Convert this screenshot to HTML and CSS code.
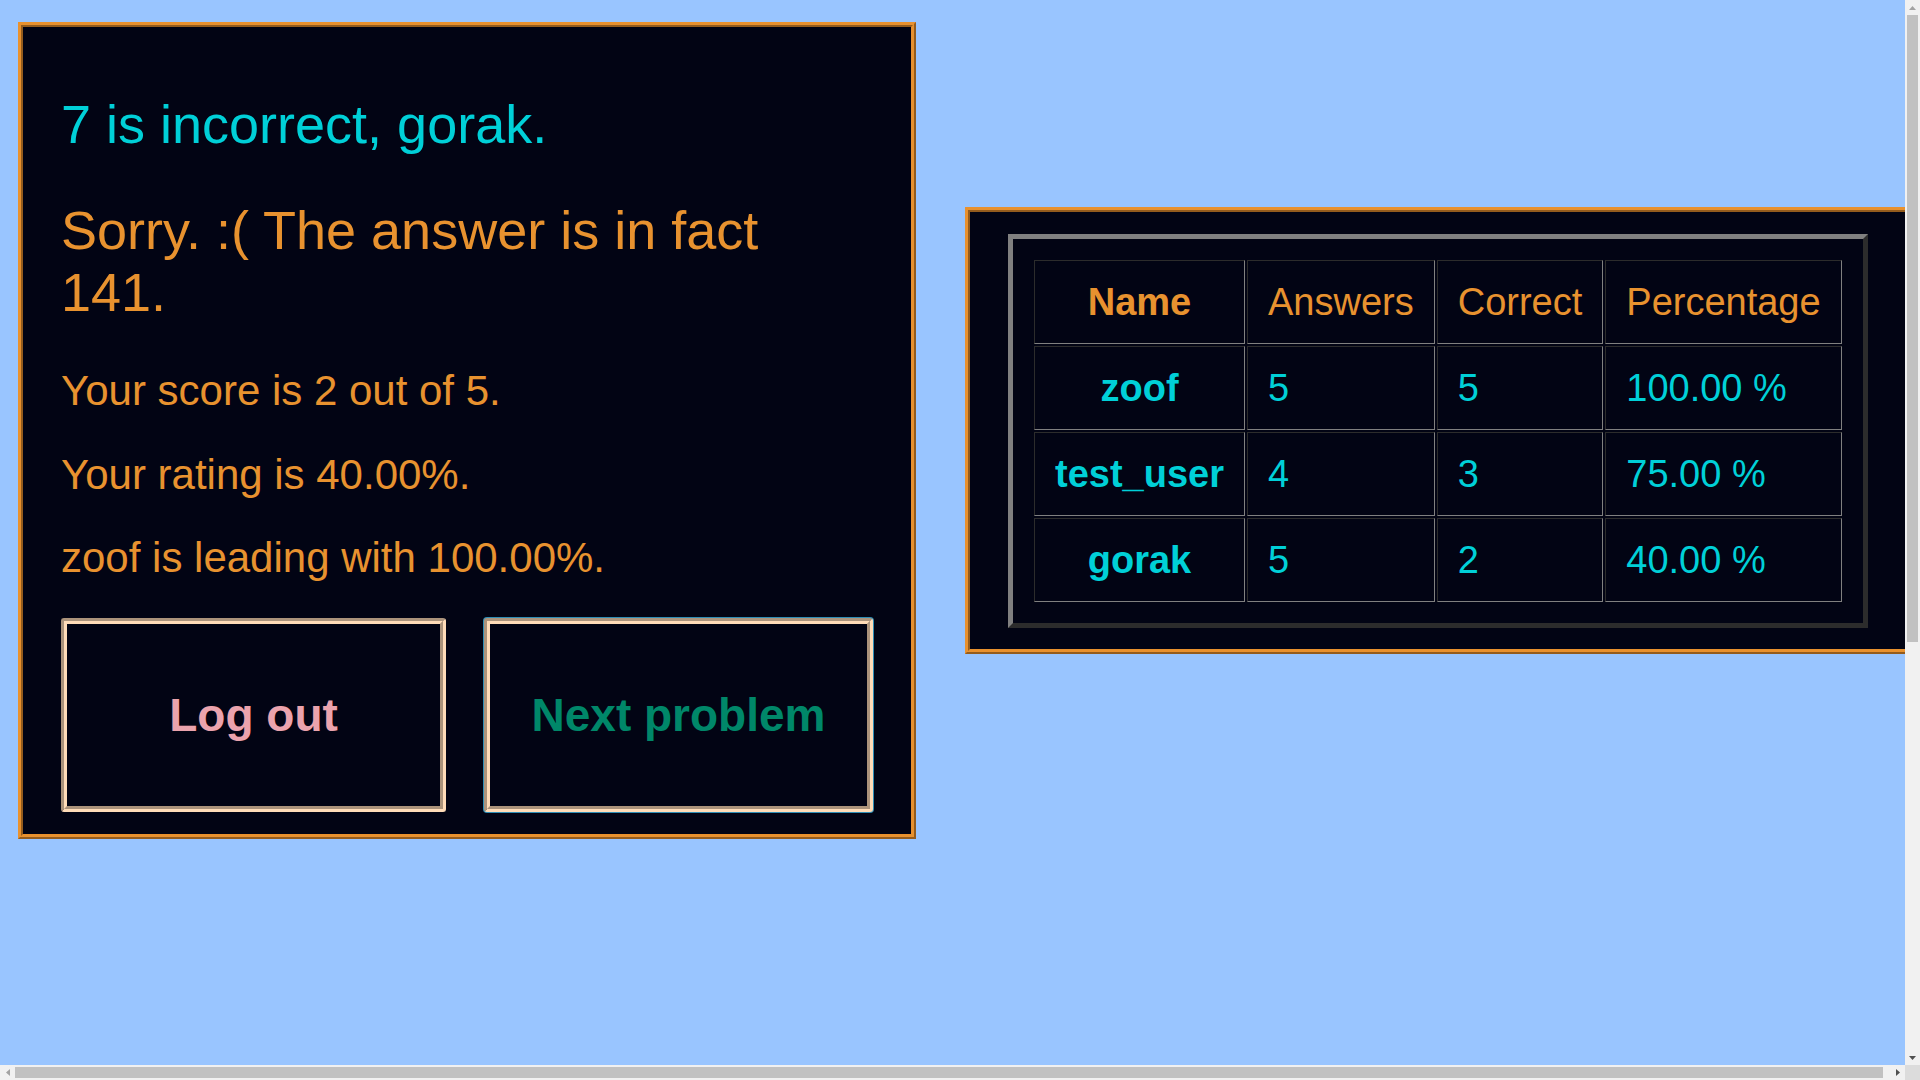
FILE: index.html
```html
<!DOCTYPE html>
<html lang="en">
<head>
<meta charset="utf-8">
<title>Quiz result</title>
<link rel="stylesheet" href="styles.css">
</head>
<body>
<div class="row">
  <section class="panel result">
    <p class="big cyan">7 is incorrect, gorak.</p>
    <p class="big orange">Sorry. :( The answer is in fact 141.</p>
    <p class="small">Your score is 2 out of 5.</p>
    <p class="small">Your rating is 40.00%.</p>
    <p class="small">zoof is leading with 100.00%.</p>
    <div class="actions">
      <button class="btn logout" type="button">Log out</button>
      <button class="btn next" type="button">Next problem</button>
    </div>
  </section>
  <section class="panel board">
    <table class="scores">
      <tr class="head">
        <th>Name</th>
        <td>Answers</td>
        <td>Correct</td>
        <td>Percentage</td>
      </tr>
      <tr>
        <th>zoof</th>
        <td>5</td>
        <td>5</td>
        <td>100.00 %</td>
      </tr>
      <tr>
        <th>test_user</th>
        <td>4</td>
        <td>3</td>
        <td>75.00 %</td>
      </tr>
      <tr>
        <th>gorak</th>
        <td>5</td>
        <td>2</td>
        <td>40.00 %</td>
      </tr>
    </table>
  </section>
</div>

<div class="vscroll" aria-hidden="true">
  <span class="sbtn"><svg width="7" height="4" viewBox="0 0 7 4"><polygon points="0,4 7,4 3.5,0" fill="#a3a3a3"/></svg></span>
  <span class="vtrack"><span class="vthumb"></span></span>
  <span class="sbtn"><svg width="7" height="4" viewBox="0 0 7 4"><polygon points="0,0 7,0 3.5,4" fill="#505050"/></svg></span>
</div>
<div class="hscroll" aria-hidden="true">
  <span class="sbtn"><svg width="4" height="7" viewBox="0 0 4 7"><polygon points="4,0 4,7 0,3.5" fill="#a3a3a3"/></svg></span>
  <span class="htrack"><span class="hthumb"></span></span>
  <span class="sbtn"><svg width="4" height="7" viewBox="0 0 4 7"><polygon points="0,0 0,7 4,3.5" fill="#505050"/></svg></span>
</div>
<div class="scorner" aria-hidden="true"></div>
</body>
</html>
```

FILE: styles.css
```css
html {
  background: #99c5ff;
}

body {
  margin: 8px;
  min-height: 1742px;
  font-family: "Liberation Sans", Arial, sans-serif;
  color: #e8922f;
}

.row {
  display: flex;
  align-items: center;
  gap: 49px;
  padding: 14px 0 0 10px;
}

.panel {
  flex: none;
  background: #020414;
  border: 5px ridge #e8912e;
}

.result {
  width: 812px;
  padding: 22px 38px 22px;
}

.big {
  font-size: 54px;
  margin: 44px 0 44px;
}

.cyan {
  color: #00d0d8;
}

.orange {
  color: #e8922f;
}

.small {
  font-size: 42px;
  margin: 35.6px 0;
}

.actions {
  display: grid;
  grid-template-columns: 385fr 389fr;
  gap: 38px;
}

.btn {
  height: 194px;
  background: #020414;
  border: 6px groove #ffdcb8;
  border-radius: 3px;
  font-family: "Liberation Sans", Arial, sans-serif;
  font-weight: bold;
  font-size: 46px;
  padding: 0;
}

.logout {
  color: #eba3ad;
}

.next {
  color: #008769;
  box-shadow: 0 0 0 1px #2e8db5;
}

.board {
  padding: 22px 38px 21px;
}

.scores {
  border: 5px outset #808080;
  border-spacing: 2px;
  padding: 19px;
  font-size: 38px;
  line-height: 44px;
}

.scores th,
.scores td {
  border: 1px inset #808080;
  padding: 19px 20px;
  text-align: left;
  color: #00d0d8;
}

.scores th {
  text-align: center;
  font-weight: bold;
}

.scores .head th,
.scores .head td {
  color: #e8922f;
}

/* window scrollbars, as seen in the capture */
.vscroll,
.hscroll {
  position: fixed;
  display: flex;
  background: #f1f1f1;
}

.vscroll {
  top: 0;
  right: 0;
  width: 15px;
  height: calc(100vh - 15px);
  flex-direction: column;
}

.hscroll {
  left: 0;
  bottom: 0;
  height: 15px;
  width: calc(100vw - 15px);
}

.sbtn {
  flex: none;
  width: 15px;
  height: 15px;
  display: flex;
  align-items: center;
  justify-content: center;
}

.vtrack,
.htrack {
  flex: 1;
  display: flex;
}

.vtrack {
  padding: 0 2px;
}

.htrack {
  padding: 2px 0;
}

.vthumb {
  width: 100%;
  height: 60.6%;
  background: #c1c1c1;
}

.hthumb {
  height: 100%;
  width: 99.6%;
  background: #c1c1c1;
}

.scorner {
  position: fixed;
  right: 0;
  bottom: 0;
  width: 15px;
  height: 15px;
  background: #dcdcdc;
}
```
